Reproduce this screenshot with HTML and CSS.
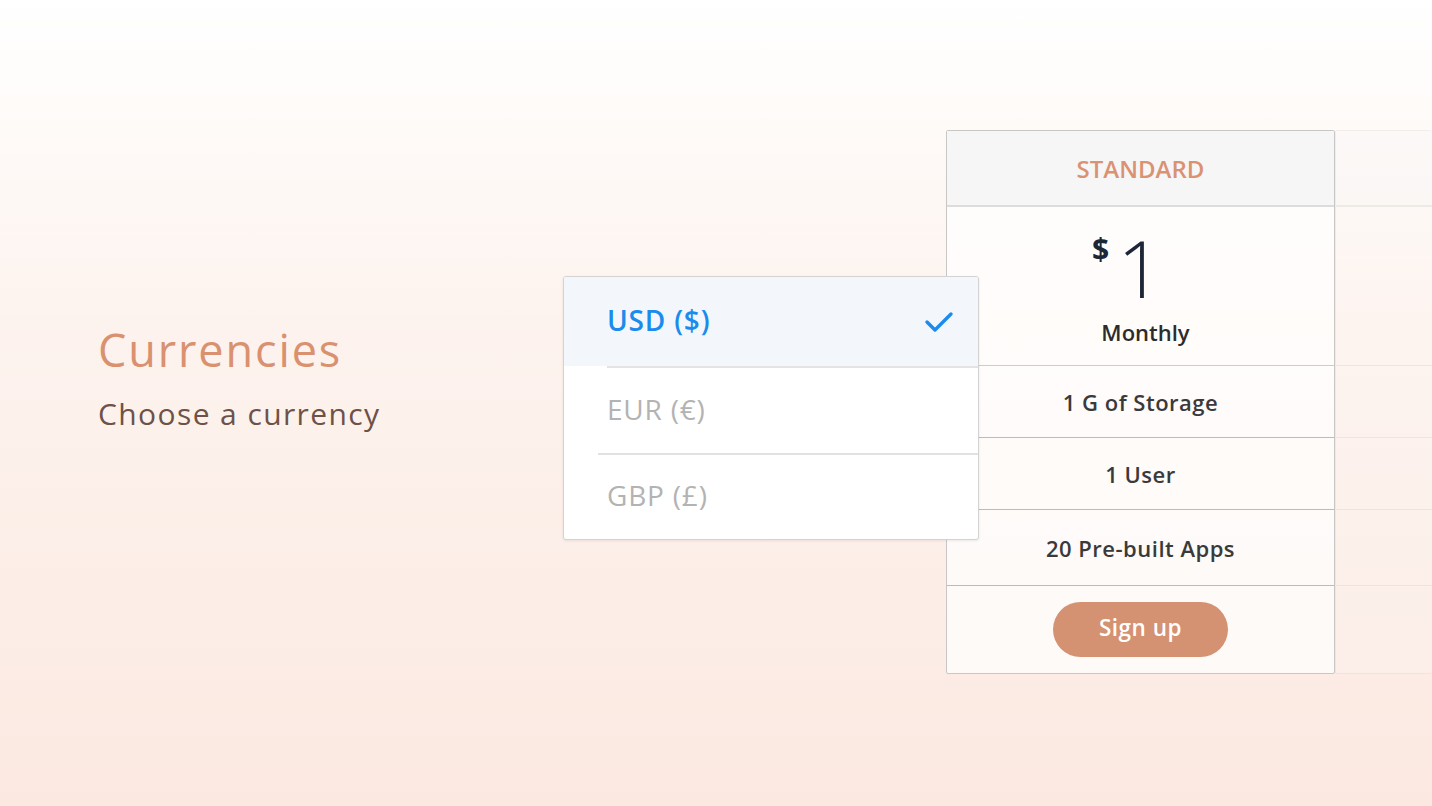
FILE: index.html
```html
<!DOCTYPE html>
<html lang="en">
<head>
<meta charset="utf-8">
<title>Currencies</title>
<link rel="stylesheet" href="styles.css">
</head>
<body>
<main class="stage">
  <section class="intro">
    <h1 class="intro-title">Currencies</h1>
    <p class="intro-sub">Choose a currency</p>
  </section>
  <section class="pricing">
    <div class="card">
      <div class="card-head">STANDARD</div>
      <div class="card-price">
        <div class="price"><span class="price-cur">$</span><span class="price-num">1</span></div>
        <div class="price-period">Monthly</div>
      </div>
      <div class="card-row">1 G of Storage</div>
      <div class="card-row">1 User</div>
      <div class="card-row row-tall">20 Pre-built Apps</div>
      <div class="card-foot"><button class="signup">Sign up</button></div>
    </div>
    <div class="card ghost">
      <div class="card-head"></div>
      <div class="card-price"></div>
      <div class="card-row"></div>
      <div class="card-row"></div>
      <div class="card-row row-tall"></div>
      <div class="card-foot"></div>
    </div>
    <ul class="menu">
      <li class="menu-item active">
        <span>USD ($)</span>
        <svg class="check" width="30" height="22" viewBox="0 0 30 22"><path d="M3 11 L11 19 L27 3" fill="none" stroke="#1b8bec" stroke-width="3.4" stroke-linecap="round" stroke-linejoin="round"/></svg>
      </li>
      <li class="menu-item sep1"><span>EUR (€)</span></li>
      <li class="menu-item sep2"><span>GBP (£)</span></li>
    </ul>
  </section>
</main>
</body>
</html>
```
FILE: styles.css
```css
* { box-sizing: border-box; }
html, body { margin: 0; padding: 0; }
body {
  width: 1432px;
  height: 806px;
  overflow: hidden;
  background: linear-gradient(to bottom, #ffffff 0%, #fdf3ee 40%, #fbe9e1 100%);
  font-family: "Open Sans", "Lato", sans-serif;
}
.stage {
  display: flex;
  align-items: flex-start;
  height: 806px;
  overflow: hidden;
}
.intro {
  flex: 0 0 946px;
  padding-left: 98px;
  padding-top: 318px;
}
.intro-title {
  margin: 0;
  font-weight: 400;
  font-size: 45px;
  line-height: 64px;
  color: #d9916f;
  letter-spacing: 1.9px;
}
.intro-sub {
  margin: 0;
  margin-top: 14px;
  font-size: 30px;
  line-height: 36px;
  color: #6e5148;
  letter-spacing: 1.4px;
}
.pricing {
  position: relative;
  display: flex;
  flex: 0 0 486px;
  margin-top: 130px;
}
.card {
  flex: 0 0 389px;
  width: 389px;
  border: 1px solid #c9c7c5;
  border-radius: 2px;
  background: rgba(255, 255, 255, 0.72);
  display: flex;
  flex-direction: column;
}
.card-head {
  height: 76px;
  background: #f6f6f6;
  border-bottom: 2px solid #dedcda;
  display: flex;
  align-items: center;
  justify-content: center;
  font-weight: 600;
  font-size: 24px;
  color: #da9272;
}
.card-price {
  height: 159px;
  border-bottom: 1px solid #cfcbc9;
  display: flex;
  flex-direction: column;
  align-items: center;
  padding-top: 27px;
}
.price {
  display: flex;
  align-items: flex-start;
  color: #1d2636;
  margin-right: 26px;
  height: 66px;
}
.price-cur {
  font-size: 30px;
  font-weight: 700;
  line-height: 34px;
  margin-top: -2px;
  margin-right: 8px;
}
.price-num {
  font-size: 80px;
  font-weight: 300;
  line-height: 66px;
}
.price-period {
  margin-top: 18px;
  font-size: 22px;
  line-height: 28px;
  font-weight: 600;
  color: #2c2c2c;
  margin-left: 10px;
}
.card-row {
  height: 72px;
  border-bottom: 1px solid #bdbab8;
  display: flex;
  align-items: center;
  justify-content: center;
  font-size: 22px;
  font-weight: 600;
  letter-spacing: 0.5px;
  color: #3a3a3a;
}
.row-tall { height: 76px; }
.card-foot {
  height: 87px;
  display: flex;
  align-items: center;
  justify-content: center;
}
.signup {
  width: 175px;
  height: 55px;
  border: none;
  border-radius: 28px;
  background: #d49272;
  color: #fff;
  font-family: inherit;
  font-weight: 600;
  font-size: 22.5px;
  letter-spacing: 0.5px;
  padding: 0 0 4px;
}
.ghost {
  flex: 0 0 97px;
  width: 97px;
  border-color: rgba(220, 210, 205, 0.35);
  border-right: none;
  background: rgba(255, 255, 255, 0.12);
}
.ghost .card-head { background: rgba(245, 245, 245, 0.3); border-bottom-color: rgba(225, 215, 210, 0.45); }
.ghost .card-price, .ghost .card-row { border-bottom-color: rgba(225, 210, 203, 0.45); }
.menu {
  position: absolute;
  left: -383px;
  top: 146px;
  width: 416px;
  margin: 0;
  padding: 0;
  list-style: none;
  background: #fff;
  border: 1px solid #d3d3d3;
  border-radius: 3px;
  box-shadow: 0 1px 3px rgba(0, 0, 0, 0.08);
  overflow: hidden;
}
.menu-item {
  height: 87px;
  display: flex;
  align-items: center;
  justify-content: space-between;
  padding: 0 24px 0 43px;
  font-size: 28px;
  letter-spacing: 0.8px;
  color: #b3b3b3;
  position: relative;
}
.menu-item span { padding-bottom: 4px; }
.menu-item.active {
  height: 89px;
  background: #f3f7fc;
  color: #1b8bec;
  font-weight: 600;
}
.sep1 { border-top: 2px solid #e3e3e3; margin-left: 43px; padding-left: 0; }
.sep2 { border-top: 2px solid #e2e2e2; margin-left: 34px; padding-left: 9px; height: 86px; }
.check { display: block; }
```
